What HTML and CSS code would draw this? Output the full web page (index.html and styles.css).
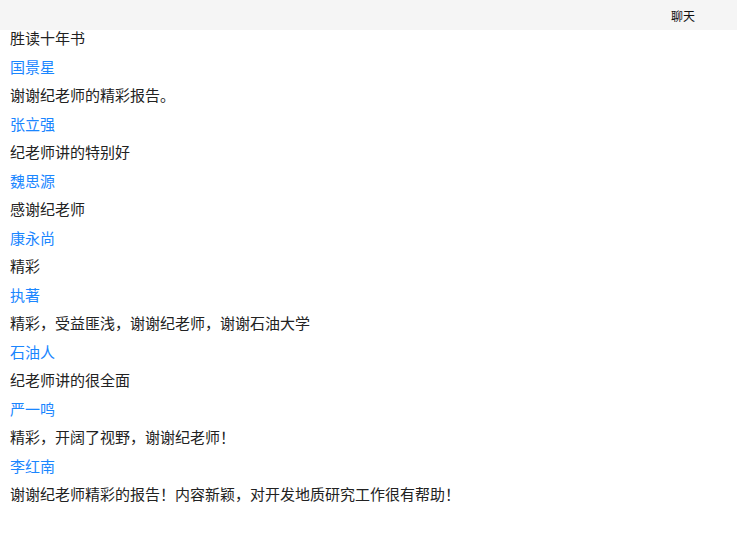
FILE: index.html
```html
<!DOCTYPE html>
<html lang="zh-CN">
<head>
    <meta charset="UTF-8">
    <meta name="viewport" content="width=device-width, initial-scale=1.0">
    <title>聊天</title>
    <link rel="stylesheet" href="styles.css">
</head>
<body>
<div class="header">
    <span class="title">聊天</span>
</div>
<div class="chat">
    <div class="msg">胜读十年书</div>
    <div class="name">国景星</div>
    <div class="msg">谢谢纪老师的精彩报告。</div>
    <div class="name">张立强</div>
    <div class="msg">纪老师讲的特别好</div>
    <div class="name">魏思源</div>
    <div class="msg">感谢纪老师</div>
    <div class="name">康永尚</div>
    <div class="msg">精彩</div>
    <div class="name">执著</div>
    <div class="msg">精彩，受益匪浅，谢谢纪老师，谢谢石油大学</div>
    <div class="name">石油人</div>
    <div class="msg">纪老师讲的很全面</div>
    <div class="name">严一鸣</div>
    <div class="msg">精彩，开阔了视野，谢谢纪老师！</div>
    <div class="name">李红南</div>
    <div class="msg">谢谢纪老师精彩的报告！内容新颖，对开发地质研究工作很有帮助！</div>
</div>
</body>
</html>
```

FILE: styles.css
```css
body {
    margin: 0;
    font-family: "Noto Sans CJK SC", "Noto Sans", sans-serif;
    background-color: #fff;
    color: #222;
}
.header {
    position: fixed;
    top: 0;
    left: 0;
    right: 0;
    height: 30px;
    background-color: #f5f5f5;
    display: flex;
    justify-content: flex-end;
    align-items: center;
    padding-right: 42px;
    font-size: 12px;
    color: #111;
    z-index: 1;
}
.chat {
    padding: 24px 10px 0;
}
.msg,
.name {
    font-size: 15px;
    height: 28.5px;
    line-height: 28.5px;
    white-space: nowrap;
}
.name {
    color: #1a86ff;
}
```
